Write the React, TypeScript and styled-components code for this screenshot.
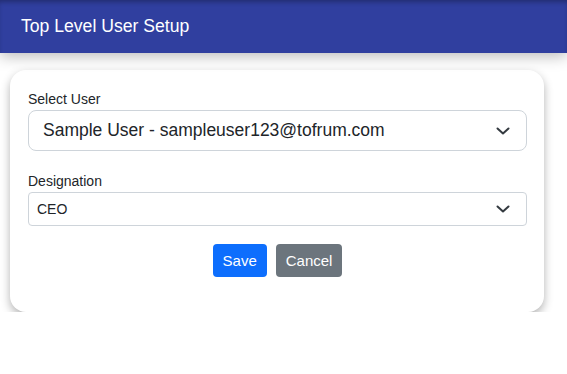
import React from 'react';
import styled, { createGlobalStyle } from 'styled-components';

const GlobalStyle = createGlobalStyle`
  html, body {
    margin: 0;
    padding: 0;
    background: #fff;
    font-family: "Liberation Sans", Arial, sans-serif;
    color: #212529;
  }
  * { box-sizing: border-box; }
`;

const Header = styled.header`
  position: relative;
  height: 53px;
  background-color: #303f9f;
  display: flex;
  align-items: center;
  padding: 0 21px;
  box-shadow: inset 0 4px 5px -2px rgba(0, 0, 0, 0.3), 0 3px 14px rgba(0, 0, 0, 0.28);
`;

const Title = styled.h1`
  margin: 0;
  font-size: 17.6px;
  font-weight: 400;
  color: #fff;
`;

const Card = styled.div`
  margin: 17px 0 0 10px;
  width: 534px;
  background: #fff;
  border-radius: 16px;
  box-shadow: 0 4px 10px rgba(0, 0, 0, 0.3);
  padding: 19px 17px 35px 18px;
`;

const Field = styled.div<{ $gap?: number }>`
  margin-bottom: ${(p) => p.$gap ?? 0}px;
`;

const Label = styled.label`
  display: block;
  font-size: 14px;
  line-height: 21px;
`;

const SelectWrap = styled.div`
  position: relative;
`;

const Select = styled.select<{ $large?: boolean }>`
  display: block;
  width: 100%;
  appearance: none;
  -webkit-appearance: none;
  font-family: inherit;
  color: #212529;
  background: #fff;
  border: 1px solid #ced4da;
  border-radius: ${(p) => (p.$large ? '8px' : '4px')};
  font-size: ${(p) => (p.$large ? '17.5px' : '14px')};
  line-height: ${(p) => (p.$large ? '27px' : '21px')};
  padding: ${(p) => (p.$large ? '6px 40px 6px 14px' : '6px 40px 5px 8px')};
  outline: none;
`;

const Chevron = styled.svg`
  position: absolute;
  right: 17px;
  top: 50%;
  transform: translateY(-50%);
  pointer-events: none;
`;

const Actions = styled.div`
  display: flex;
  justify-content: center;
  gap: 9px;
  margin-top: 18px;
`;

const Button = styled.button<{ $variant: 'primary' | 'secondary' }>`
  font-family: inherit;
  font-size: 15px;
  line-height: 21px;
  padding: 5px 9px;
  border: 1px solid transparent;
  border-radius: 4px;
  color: #fff;
  cursor: pointer;
  background-color: ${(p) => (p.$variant === 'primary' ? '#0d6efd' : '#6c757d')};
`;

const ChevronIcon = () => (
  <Chevron width="14" height="8" viewBox="0 0 14 8">
    <path d="M1.5 1.5 L7 6.5 L12.5 1.5" fill="none" stroke="#343a40" strokeWidth="2" strokeLinecap="round" strokeLinejoin="round" />
  </Chevron>
);

const App = () => {
  return (
    <>
      <GlobalStyle />
      <Header>
        <Title>Top Level User Setup</Title>
      </Header>
      <Card>
        <Field $gap={20}>
          <Label>Select User</Label>
          <SelectWrap>
            <Select $large defaultValue="1">
              <option value="1">Sample User - sampleuser123@tofrum.com</option>
            </Select>
            <ChevronIcon />
          </SelectWrap>
        </Field>
        <Field>
          <Label>Designation</Label>
          <SelectWrap>
            <Select defaultValue="ceo">
              <option value="ceo">CEO</option>
            </Select>
            <ChevronIcon />
          </SelectWrap>
        </Field>
        <Actions>
          <Button $variant="primary">Save</Button>
          <Button $variant="secondary">Cancel</Button>
        </Actions>
      </Card>
    </>
  );
};

export default App;
